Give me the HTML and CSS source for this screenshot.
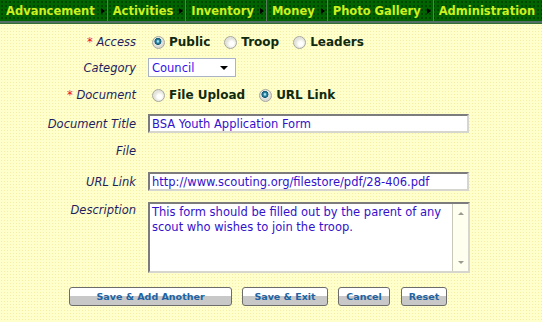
FILE: index.html
```html
<!DOCTYPE html>
<html lang="en">
<head>
  <meta charset="UTF-8" />
  <title>Add Document</title>
  <link rel="stylesheet" href="styles.css">
</head>
<body>

  <nav class="menu">
    <a class="menu-item" href="#">Advancement<span class="menu-arrow"></span></a>
    <a class="menu-item" href="#">Activities<span class="menu-arrow"></span></a>
    <a class="menu-item" href="#">Inventory<span class="menu-arrow"></span></a>
    <a class="menu-item" href="#">Money<span class="menu-arrow"></span></a>
    <a class="menu-item" href="#">Photo Gallery<span class="menu-arrow"></span></a>
    <a class="menu-item last" href="#">Administration</a>
  </nav>

  <form class="doc-form">
    <div class="row row-access">
      <label class="field-label"><span class="req">*</span> Access</label>
      <div class="options">
        <label class="option"><input type="radio" name="access" checked> Public</label>
        <label class="option"><input type="radio" name="access"> Troop</label>
        <label class="option"><input type="radio" name="access"> Leaders</label>
      </div>
    </div>

    <div class="row row-category">
      <label class="field-label">Category</label>
      <div class="select-wrap">
        <select class="select">
          <option>Council</option>
        </select>
        <span class="select-arrow"></span>
      </div>
    </div>

    <div class="row row-document">
      <label class="field-label"><span class="req">*</span> Document</label>
      <div class="options">
        <label class="option"><input type="radio" name="doc"> File Upload</label>
        <label class="option"><input type="radio" name="doc" checked> URL Link</label>
      </div>
    </div>

    <div class="row row-title">
      <label class="field-label">Document Title</label>
      <input class="text-input" type="text" value="BSA Youth Application Form">
    </div>

    <div class="row row-file">
      <label class="field-label">File</label>
    </div>

    <div class="row row-url">
      <label class="field-label">URL Link</label>
      <input class="text-input" type="text" value="http://www.scouting.org/filestore/pdf/28-406.pdf">
    </div>

    <div class="row row-desc">
      <label class="field-label">Description</label>
      <div class="textbox">
        <textarea class="textarea">This form should be filled out by the parent of any scout who wishes to join the troop.</textarea>
        <div class="scroll">
          <span class="scroll-up"></span>
          <span class="scroll-down"></span>
        </div>
      </div>
    </div>

    <div class="buttons">
      <button type="button" class="btn btn-another">Save &amp; Add Another</button>
      <button type="button" class="btn btn-exit">Save &amp; Exit</button>
      <button type="button" class="btn btn-cancel">Cancel</button>
      <button type="reset" class="btn btn-reset">Reset</button>
    </div>
  </form>

</body>
</html>
```

FILE: styles.css
```css
* {
  box-sizing: border-box;
}

html, body {
  margin: 0;
  font-family: 'DejaVu Sans', Verdana, sans-serif;
}

body {
  background-color: #ffffcc;
  background-image: radial-gradient(circle, #f6eea6 0.7px, transparent 1px);
  background-size: 3px 3px;
  height: 322px;
  overflow: hidden;
}

/* top menu */
.menu {
  display: flex;
  height: 23px;
  padding-left: 1px;
  background-color: #006400;
  background-image: radial-gradient(circle, #003800 0.6px, transparent 1px);
  background-size: 4px 4px;
  border-bottom: 2px solid #566e68;
  box-shadow: 0 1px 0 #2f6f2f;
}

.menu-item {
  display: flex;
  align-items: center;
  height: 21px;
  padding-left: 5px;
  border-right: 1px solid #5e7a62;
  color: #ccf020;
  font-size: 11.5px;
  font-weight: bold;
  text-decoration: none;
  white-space: nowrap;
}

.menu-item.last {
  border-right: none;
}

.menu-arrow {
  width: 0;
  height: 0;
  margin-left: 6px;
  margin-right: 2px;
  border-left: 4px solid #000;
  border-top: 3.5px solid transparent;
  border-bottom: 3.5px solid transparent;
}

/* form */
.doc-form {
  padding-top: 6px;
}

.row {
  display: flex;
  align-items: center;
}

.field-label {
  width: 137px;
  padding-right: 1px;
  margin-right: 11px;
  text-align: right;
  font-style: italic;
  font-size: 11.5px;
  color: #1e1e5e;
  flex: none;
}

.req {
  color: #ee1111;
}

.row-access { height: 26px; }
.row-category { height: 25px; }
.row-document { height: 30px; }
.row-title { height: 27px; }
.row-file { height: 27px; }
.row-url { height: 27px; margin-top: 4px; }

.row-desc {
  align-items: flex-start;
  margin-top: 7px;
}

.row-desc .field-label {
  padding-top: 1px;
}

.options {
  display: flex;
  align-items: center;
  padding-left: 4px;
}

.option {
  display: flex;
  align-items: center;
  gap: 4px;
  margin-right: 14px;
  font-size: 12px;
  font-weight: bold;
  color: #102a10;
}

.option input {
  appearance: none;
  -webkit-appearance: none;
  width: 13px;
  height: 13px;
  margin: 0;
  border: 1px solid #a8a8a0;
  border-radius: 50%;
  background: radial-gradient(circle at 60% 60%, #ffffff 0 2px, #e4e4dc 5px);
}

.option input:checked {
  background: radial-gradient(circle at 45% 40%, #a8e4f0 0 0.8px, #2e8aa8 1.6px, #155a74 3.2px, #e8e8e2 3.8px, #d8d8d0 6px);
}

.select-wrap {
  display: flex;
  align-items: center;
  width: 88px;
  height: 19px;
  border: 1px solid #aab2c8;
  background: #fff;
}

.select {
  appearance: none;
  -webkit-appearance: none;
  flex: 1;
  min-width: 0;
  border: none;
  background: transparent;
  padding: 0 0 0 3px;
  font-family: inherit;
  font-size: 11.5px;
  color: #3311ee;
  outline: none;
}

.select-arrow {
  width: 0;
  height: 0;
  margin-right: 7px;
  border-top: 4px solid #000;
  border-left: 4px solid transparent;
  border-right: 4px solid transparent;
}

.text-input {
  width: 321px;
  height: 19px;
  margin: 0;
  padding: 0 2px;
  border: 2px solid;
  border-color: #7c7c7c #d6d6ce #d6d6ce #7c7c7c;
  background: #fff;
  font-family: inherit;
  font-size: 11.5px;
  color: #3311cc;
  outline: none;
}

.textbox {
  display: flex;
  width: 322px;
  height: 71px;
  border: 2px solid;
  border-color: #7c7c7c #d6d6ce #d6d6ce #7c7c7c;
  background: #fff;
}

.textarea {
  flex: 1;
  border: none;
  resize: none;
  overflow: hidden;
  padding: 1px 2px;
  margin: 0;
  font-family: inherit;
  font-size: 11.5px;
  line-height: 15px;
  color: #3311cc;
  outline: none;
}

.scroll {
  display: flex;
  flex-direction: column;
  align-items: center;
  justify-content: space-between;
  width: 16px;
  padding: 8px 0 7px;
  border-left: 1px solid #c9c9b8;
  background: #fffff0;
}

.scroll-up {
  width: 0;
  height: 0;
  border-bottom: 3px solid #9a9a90;
  border-left: 3.5px solid transparent;
  border-right: 3.5px solid transparent;
}

.scroll-down {
  width: 0;
  height: 0;
  border-top: 3px solid #9a9a90;
  border-left: 3.5px solid transparent;
  border-right: 3.5px solid transparent;
}

/* buttons */
.buttons {
  display: flex;
  gap: 10px;
  margin-top: 14px;
  padding-left: 69px;
}

.btn {
  height: 19px;
  padding: 0;
  border: 1px solid #6c6c6c;
  border-radius: 3px;
  background: linear-gradient(#ffffff 0 45%, #c8c8c8 45%);
  color: #1f63a3;
  font-family: inherit;
  font-size: 9.5px;
  font-weight: bold;
  cursor: pointer;
}

.btn-another { width: 163px; }
.btn-exit { width: 86px; }
.btn-cancel { width: 52px; }
.btn-reset { width: 46px; margin-left: 1px; }
```
